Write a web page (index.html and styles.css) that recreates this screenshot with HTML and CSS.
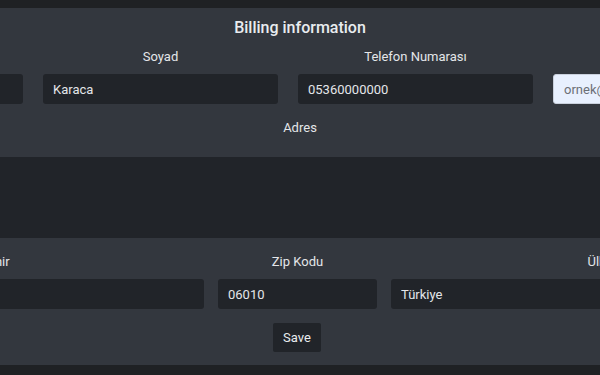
FILE: index.html
```html
<!DOCTYPE html>
<html lang="tr">
  <head>
    <meta charset="UTF-8" />
    <title>Billing information</title>
    <link rel="stylesheet" href="styles.css">
  </head>
  <body>
    <div class="topbar"></div>
    <main class="panel">
      <h1 class="title">Billing information</h1>
      <form class="billing">
        <div class="row row-top">
          <label class="field">
            <span>Ad</span>
            <input type="text" value="Ahmet" />
          </label>
          <label class="field">
            <span>Soyad</span>
            <input type="text" value="Karaca" />
          </label>
          <label class="field">
            <span>Telefon Numarası</span>
            <input type="text" value="05360000000" />
          </label>
          <label class="field">
            <span>E-posta</span>
            <input class="light" type="email" placeholder="ornek@gmail.com" />
          </label>
        </div>

        <label class="field field-address">
          <span>Adres</span>
          <textarea></textarea>
        </label>

        <div class="row row-bottom">
          <label class="field wide">
            <span>Şehir</span>
            <input type="text" value="Ankara" />
          </label>
          <label class="field narrow">
            <span>Zip Kodu</span>
            <input type="text" value="06010" />
          </label>
          <label class="field wide">
            <span>Ülke</span>
            <input type="text" value="Türkiye" />
          </label>
        </div>

        <div class="actions">
          <button type="button">Save</button>
        </div>
      </form>
    </main>
    <div class="bottombar"></div>
  </body>
</html>
```

FILE: styles.css
```css
* {
  box-sizing: border-box;
}
html,
body {
  margin: 0;
  height: 100%;
  overflow: hidden;
}
body {
  font-family: Roboto, "Liberation Sans", Arial, sans-serif;
  background: #1f2124;
  color: #e4e6e9;
  width: 600px;
}
.topbar {
  height: 8px;
  background: #1f2124;
}
.bottombar {
  height: 10px;
  background: #1f2124;
}
.panel {
  background: #33373e;
  padding-bottom: 13px;
  overflow: hidden;
}
.title {
  margin: 0;
  height: 40px;
  line-height: 40px;
  font-size: 16px;
  font-weight: 500;
  text-align: center;
  color: #e9ecef;
}

/* Fields */
.row {
  display: flex;
  gap: 20px;
}
.row-top {
  margin-left: -212px;
}
.row-top .field {
  flex: none;
  width: 235px;
}
.row-bottom {
  gap: 14px;
  margin-left: -214px;
  margin-top: 15px;
}
.row-bottom .wide {
  flex: none;
  width: 418px;
}
.row-bottom .narrow {
  flex: none;
  width: 159px;
}
.field {
  display: flex;
  flex-direction: column;
}
.field span {
  display: block;
  height: 18px;
  line-height: 18px;
  font-size: 13px;
  font-weight: 400;
  text-align: center;
  color: #e4e6e9;
  margin-bottom: 8px;
  white-space: nowrap;
}
.field input {
  height: 30px;
  padding: 0 10px;
  border: none;
  border-radius: 3px;
  background: #212429;
  color: #e4e6e9;
  font-family: inherit;
  font-size: 13px;
  outline: none;
}
.field input.light {
  background: #e8f0fe;
  border: 1px solid #c9d0dc;
  color: #555;
}
.field input.light::placeholder {
  color: #6b6f76;
}
.field-address {
  margin: 15px -20px 0;
}
.field-address span {
  margin-bottom: 20px;
}
.field-address textarea {
  height: 81px;
  border: none;
  background: #212429;
  resize: none;
  outline: none;
}

/* Save */
.actions {
  display: flex;
  justify-content: center;
  margin-top: 14px;
}
.actions button {
  width: 48px;
  height: 29px;
  margin-left: -6px;
  padding: 0;
  border: none;
  border-radius: 2px;
  background: #212429;
  color: #e9ecef;
  font-family: inherit;
  font-size: 13px;
  font-weight: 400;
}
```
